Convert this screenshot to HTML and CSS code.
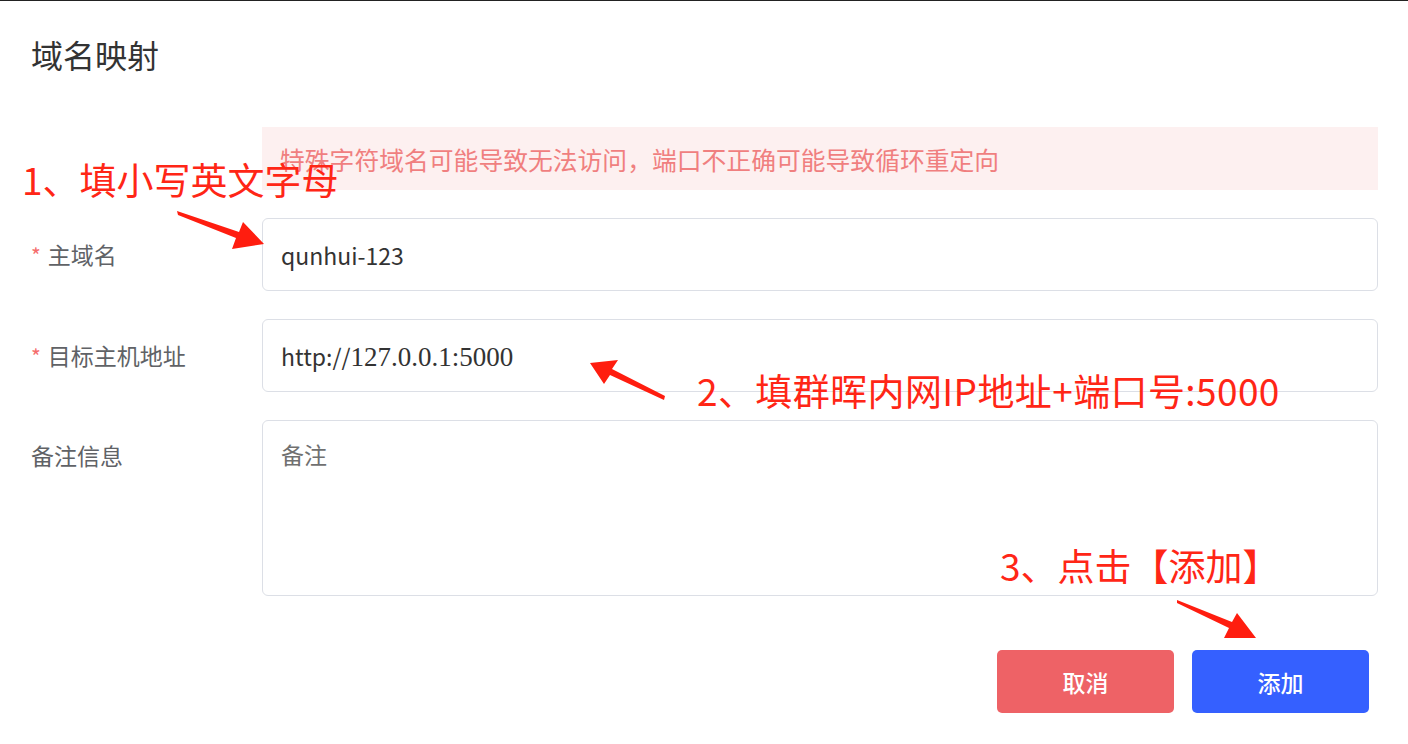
FILE: index.html
```html
<!DOCTYPE html>
<html lang="zh-CN">
<head>
<meta charset="utf-8">
<title>域名映射</title>
<link rel="stylesheet" href="styles.css">
</head>
<body>
<div class="page">
  <h1 class="title">域名映射</h1>
  <div class="alert-row">
    <div class="alert">特殊字符域名可能导致无法访问，端口不正确可能导致循环重定向</div>
  </div>
  <div class="row">
    <div class="label"><span class="req">*</span>主域名</div>
    <div class="input"><span class="value">qunhui-123</span></div>
  </div>
  <div class="row">
    <div class="label"><span class="req">*</span>目标主机地址</div>
    <div class="input"><span class="value">http://<span class="serif">127.0.0.1:5000</span></span></div>
  </div>
  <div class="row row-top">
    <div class="label label-top">备注信息</div>
    <div class="textarea"><span class="placeholder">备注</span></div>
  </div>
  <div class="actions">
    <button class="btn btn-cancel">取消</button>
    <button class="btn btn-add">添加</button>
  </div>
</div>
<div class="notes">
  <svg class="arrows" width="1408" height="744" viewBox="0 0 1408 744">
    <polygon points="177,210 239,231 243,221 264,243 232,248 236,237 178,214" />
    <polygon points="665,395 612,368 618,359 590,362 604,383 610,374 664,399" />
    <polygon points="1177,599 1232,621 1237,612 1256,637 1224,637 1229,627 1177,602" />
  </svg>
  <span class="note note1">1、填小写英文字母</span>
  <span class="note note2">2、填群晖内网IP地址+端口号:5000</span>
  <span class="note note3">3、点击【添加】</span>
</div>
</body>
</html>
```

FILE: styles.css
```css
html, body {
  margin: 0;
  padding: 0;
  background: #ffffff;
}
body {
  position: relative;
  width: 1408px;
  height: 744px;
  overflow: hidden;
  border-top: 1px solid #222222;
  box-sizing: border-box;
  font-family: "Noto Sans CJK SC", "Noto Sans", sans-serif;
}
.page {
  padding: 0 30px 0 31px;
}
.title {
  margin: 0;
  padding-top: 33px;
  font-size: 32px;
  line-height: 40px;
  font-weight: 400;
  color: #333333;
}
.alert-row {
  margin-top: 53px;
  padding-left: 231px;
}
.alert {
  height: 63px;
  display: flex;
  align-items: center;
  padding-left: 18px;
  background: #fdf0f0;
  color: #f07f7f;
  font-size: 24.8px;
}
.row {
  display: flex;
  align-items: center;
  margin-top: 28px;
}
.row-top {
  align-items: flex-start;
}
.label {
  width: 231px;
  flex: none;
  font-size: 23px;
  line-height: 34px;
  color: #606266;
}
.label-top {
  margin-top: 18px;
}
.req {
  color: #f56c6c;
  font-size: 21px;
  margin-right: 7px;
}
.input {
  flex: 1;
  height: 73px;
  box-sizing: border-box;
  border: 1px solid #dcdfe6;
  border-radius: 6px;
  display: flex;
  align-items: center;
  padding-left: 18px;
  font-size: 23px;
  color: #333333;
}
.serif {
  font-family: "Liberation Serif", serif;
  font-size: 27px;
}
.textarea {
  flex: 1;
  height: 176px;
  box-sizing: border-box;
  border: 1px solid #dcdfe6;
  border-radius: 6px;
  padding: 16px 18px;
  font-size: 23px;
  line-height: 34px;
}
.placeholder {
  color: #707070;
}
.actions {
  display: flex;
  justify-content: flex-end;
  gap: 18px;
  margin-top: 54px;
  padding-right: 9px;
}
.btn {
  width: 177px;
  height: 63px;
  border: none;
  border-radius: 5px;
  color: #ffffff;
  font-family: "Noto Sans CJK SC", sans-serif;
  font-size: 23px;
  font-weight: 500;
  padding: 0;
}
.btn-cancel {
  background: #ee6266;
}
.btn-add {
  background: #3560ff;
}
.notes {
  position: absolute;
  inset: 0;
  pointer-events: none;
}
.arrows {
  position: absolute;
  left: 0;
  top: 0;
}
.arrows polygon {
  fill: #ff1d0f;
}
.note {
  position: absolute;
  font-size: 37px;
  line-height: 1;
  color: #ff2616;
  white-space: nowrap;
}
.note1 {
  left: 22px;
  top: 160px;
}
.note2 {
  left: 697px;
  top: 371px;
  letter-spacing: 0.4px;
}
.note3 {
  left: 1000px;
  top: 546px;
}
```
